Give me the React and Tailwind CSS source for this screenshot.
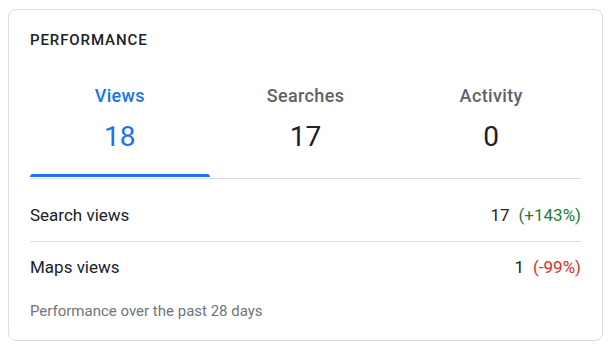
import React from "react";

const tabs = [
  { label: "Views", value: "18", active: true },
  { label: "Searches", value: "17" },
  { label: "Activity", value: "0" },
];

const rows = [
  { label: "Search views", value: "17", change: "(+143%)", up: true },
  { label: "Maps views", value: "1", change: "(-99%)", up: false },
];

export default function App() {
  return (
    <div className="w-[611px] h-[349px] bg-white pt-[9px] pl-[8px] font-['Roboto',sans-serif]">
      <div className="w-[595px] h-[332px] border border-[#dadce0] rounded-[8px] px-[21px] pt-[20px]">
        {/* Header */}
        <div className="text-[15px] leading-[20px] font-medium tracking-[0.06em] text-[#202124]">
          PERFORMANCE
        </div>

        {/* Tabs */}
        <div className="grid grid-cols-3 gap-x-[6px] mt-[34px] border-b border-[#dadce0]">
          {tabs.map((t) => (
            <div key={t.label} className="flex flex-col items-center">
              <div
                className={`text-[18px] leading-[24px] font-medium tracking-[0.02em] ${
                  t.active ? "text-[#1a73e8]" : "text-[#5f6368]"
                }`}
              >
                {t.label}
              </div>
              <div
                className={`text-[28px] leading-[36px] mt-[11px] ${
                  t.active ? "text-[#1a73e8]" : "text-[#202124]"
                }`}
              >
                {t.value}
              </div>
              <div
                className={`w-full h-[3px] mt-[19px] mb-[1px] rounded-t-[3px] ${
                  t.active ? "bg-[#1a73e8]" : "bg-transparent"
                }`}
              />
            </div>
          ))}
        </div>

        {/* Rows */}
        <div className="flex items-center justify-between pt-[24px] pb-[14px] border-b border-[#dadce0] text-[17px] leading-[24px] text-[#202124]">
          <span>{rows[0].label}</span>
          <span>
            {rows[0].value}
            <span className="ml-[9px] text-[#188038]">{rows[0].change}</span>
          </span>
        </div>
        <div className="flex items-center justify-between pt-[13px] text-[17px] leading-[24px] text-[#202124]">
          <span>{rows[1].label}</span>
          <span>
            {rows[1].value}
            <span className="ml-[9px] text-[#d93025]">{rows[1].change}</span>
          </span>
        </div>

        {/* Footer */}
        <div className="mt-[22px] text-[15px] leading-[20px] text-[#70757a]">
          Performance over the past 28 days
        </div>
      </div>
    </div>
  );
}
